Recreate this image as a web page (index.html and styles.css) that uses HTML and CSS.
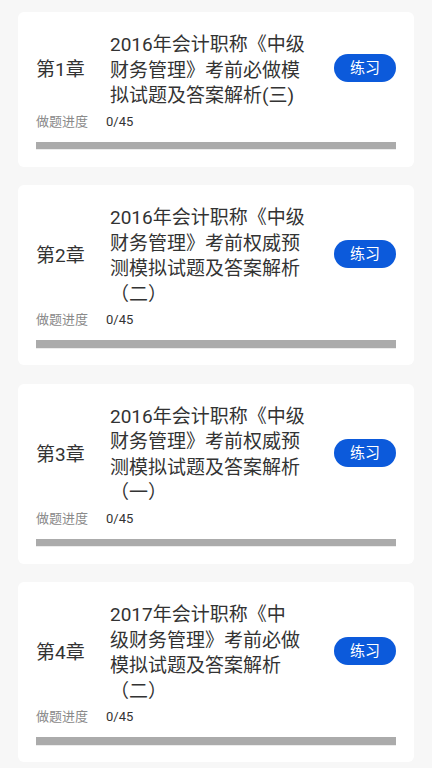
FILE: index.html
```html
<!DOCTYPE html>
<html lang="zh-CN">
<head>
<meta charset="utf-8">
<title>章节练习</title>
<link rel="stylesheet" href="styles.css">
</head>
<body>
<main class="list">
  <section class="card">
    <div class="head">
      <div class="chapter">第1章</div>
      <div class="title">2016年会计职称《中级<br>财务管理》考前必做模<br>拟试题及答案解析(三)</div>
      <button class="btn">练习</button>
    </div>
    <div class="progress"><span class="plabel">做题进度</span><span class="pvalue">0/45</span></div>
    <div class="bar"></div>
  </section>
  <section class="card">
    <div class="head">
      <div class="chapter">第2章</div>
      <div class="title">2016年会计职称《中级<br>财务管理》考前权威预<br>测模拟试题及答案解析<br>（二）</div>
      <button class="btn">练习</button>
    </div>
    <div class="progress"><span class="plabel">做题进度</span><span class="pvalue">0/45</span></div>
    <div class="bar"></div>
  </section>
  <section class="card">
    <div class="head">
      <div class="chapter">第3章</div>
      <div class="title">2016年会计职称《中级<br>财务管理》考前权威预<br>测模拟试题及答案解析<br>（一）</div>
      <button class="btn">练习</button>
    </div>
    <div class="progress"><span class="plabel">做题进度</span><span class="pvalue">0/45</span></div>
    <div class="bar"></div>
  </section>
  <section class="card">
    <div class="head">
      <div class="chapter">第4章</div>
      <div class="title">2017年会计职称《中<br>级财务管理》考前必做<br>模拟试题及答案解析<br>（二）</div>
      <button class="btn">练习</button>
    </div>
    <div class="progress"><span class="plabel">做题进度</span><span class="pvalue">0/45</span></div>
    <div class="bar"></div>
  </section>
</main>
</body>
</html>
```

FILE: styles.css
```css
html, body {
  margin: 0;
  padding: 0;
  background: #f7f7f7;
  height: 768px;
  overflow: hidden;
}
body {
  font-family: Roboto, "Noto Sans CJK SC", sans-serif;
  color: #333;
}
.list {
  display: flex;
  flex-direction: column;
  gap: 18.5px;
  padding: 12px 18px 0 18px;
}
.card {
  background: #fff;
  border-radius: 6px;
  padding: 20px 18px 17.5px 18px;
  display: flex;
  flex-direction: column;
}
.head {
  display: flex;
  align-items: center;
}
.chapter {
  width: 74px;
  flex: none;
  font-size: 19px;
  line-height: 26px;
  color: #333;
}
.title {
  flex: 1;
  font-size: 19px;
  line-height: 25.5px;
  color: #333;
  white-space: nowrap;
}
.btn {
  flex: none;
  width: 62px;
  height: 28px;
  margin-bottom: 4px;
  border: none;
  border-radius: 14px;
  background: #0c5adb;
  color: #fff;
  font-family: Roboto, "Noto Sans CJK SC", sans-serif;
  font-size: 15px;
  line-height: 28px;
  padding: 0;
}
.progress {
  display: flex;
  font-size: 13px;
  line-height: 26px;
}
.plabel {
  color: #8a8a8a;
}
.pvalue {
  margin-left: 18px;
  color: #333;
}
.bar {
  margin-top: 7px;
  height: 7.5px;
  background: #ababab;
  box-shadow: 0 1px 0 #ececec;
}
```
